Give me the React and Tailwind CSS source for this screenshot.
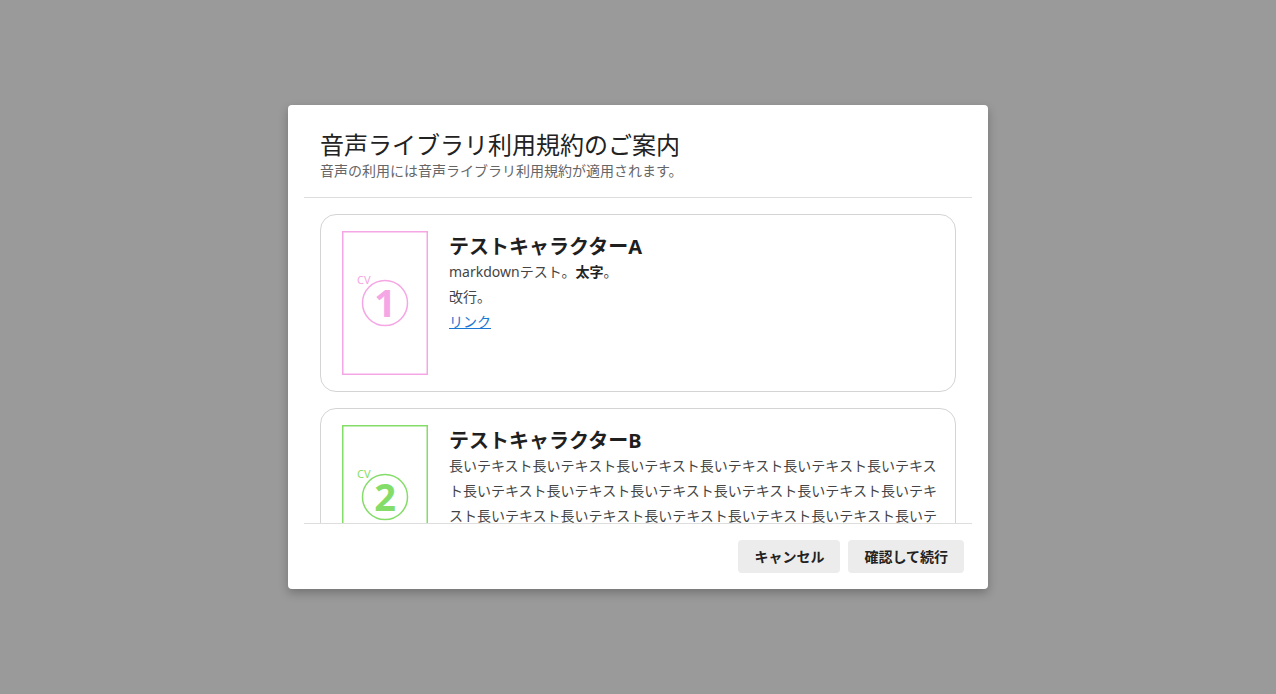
const characters = [
  {
    id: 1,
    name: 'テストキャラクターA',
    color: '#f5a6e4',
    body: (
      <>
        <p>markdownテスト。<strong className="font-bold text-[#222]">太字</strong>。</p>
        <p>改行。</p>
        <p><a href="#" className="text-[#1976d2] underline">リンク</a></p>
      </>
    ),
  },
  {
    id: 2,
    name: 'テストキャラクターB',
    color: '#84dd68',
    body: <p>{'長いテキスト'.repeat(24)}</p>,
  },
];

function Portrait({ num, color }) {
  return (
    <svg width="86" height="144" viewBox="0 0 86 144">
      <rect x="0.75" y="0.75" width="84.5" height="142.5" fill="white" stroke={color} strokeWidth="1.5" />
      <text x="15" y="53" fill={color} fontSize="11" fontFamily="'Noto Sans', sans-serif">CV</text>
      <circle cx="43" cy="72" r="22.5" fill="none" stroke={color} strokeWidth="1.5" />
      <text x="43" y="86" fill={color} fontSize="38" fontWeight="700" textAnchor="middle" fontFamily="'Noto Sans', sans-serif">{num}</text>
    </svg>
  );
}

function CharacterCard({ c }) {
  return (
    <div className="flex shrink-0 gap-4 rounded-2xl border border-[#d4d4d4] p-4">
      <div className="flex w-24 shrink-0 justify-center">
        <Portrait num={c.id} color={c.color} />
      </div>
      <div className="min-w-0 flex-1">
        <h3 className="pt-0.5 text-xl leading-7 font-bold text-[#1f1f1f]">{c.name}</h3>
        <div className="-mt-0.5 text-sm leading-[25px] text-[#444] break-all">{c.body}</div>
      </div>
    </div>
  );
}

export default function App() {
  return (
    <div
      className="flex h-[694px] w-full items-center justify-center bg-[#9a9a9a]"
      style={{ fontFamily: '"Noto Sans", "Noto Sans CJK JP", sans-serif' }}
    >
      <div className="flex h-[484px] w-[700px] flex-col rounded bg-white shadow-[0_4px_10px_rgba(0,0,0,0.25)]">
        <div className="px-8 pt-6 pb-4">
          <h2 className="text-2xl leading-8 text-[#222]">音声ライブラリ利用規約のご案内</h2>
          <p className="text-sm leading-5 text-[#666]">音声の利用には音声ライブラリ利用規約が適用されます。</p>
        </div>
        <div className="mx-4 h-px bg-[#dedede]" />
        <div className="flex flex-1 flex-col gap-4 overflow-y-auto px-8 pt-4 pb-4 [scrollbar-width:none]">
          {characters.map((c) => (
            <CharacterCard key={c.id} c={c} />
          ))}
        </div>
        <div className="mx-4 h-px bg-[#dedede]" />
        <div className="flex justify-end gap-2 px-6 py-4">
          <button className="h-[33px] rounded bg-[#ececec] px-4 text-sm font-bold text-[#222]">キャンセル</button>
          <button className="h-[33px] rounded bg-[#ececec] px-4 text-sm font-bold text-[#222]">確認して続行</button>
        </div>
      </div>
    </div>
  );
}
